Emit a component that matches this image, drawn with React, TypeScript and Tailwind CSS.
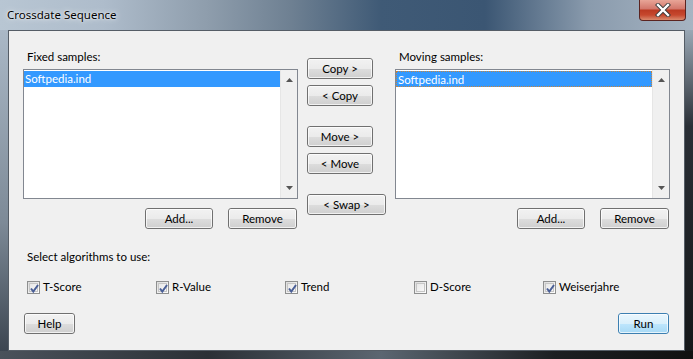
import React from "react";

const font = { fontFamily: 'Lato, "Noto Sans", sans-serif' };

function Btn({ label, w, primary }: { label: string; w: number; primary?: boolean }) {
  return (
    <div
      className={
        "relative h-[21px] rounded-[3px] border flex items-center justify-center text-[11.5px] text-black leading-none " +
        (primary
          ? "border-[#3c7fb1] bg-[linear-gradient(to_bottom,#eaf6fd_0%,#d9f0fc_50%,#bee6fd_51%,#a7d9f5_100%)]"
          : "border-[#707070] bg-[linear-gradient(to_bottom,#f2f2f2_0%,#ebebeb_50%,#dddddd_51%,#cfcfcf_100%)]")
      }
      style={{ width: w }}
    >
      <div className="absolute inset-0 rounded-[2px] border border-white/70 pointer-events-none" />
      <span className="relative">{label}</span>
    </div>
  );
}

function ListBox({ item, focus }: { item: string; focus?: boolean }) {
  return (
    <div className="h-[130px] w-[275px] border border-[#828790] bg-white flex">
      <div className="flex-1 pt-[1px]">
        <div
          className={
            "h-[16px] bg-[#3399ff] text-white text-[11.5px] leading-[15px] pl-[1px] " +
            (focus ? "border border-dotted border-[#c8843c]" : "")
          }
        >
          {item}
        </div>
      </div>
      <div className="w-[17px] bg-[#f0f0f0] border-l border-[#e6e6e6] flex flex-col items-center justify-between py-[8px]">
        <svg width="7" height="4" viewBox="0 0 7 4">
          <path d="M0 4 L3.5 0 L7 4 Z" fill="#555" />
        </svg>
        <svg width="7" height="4" viewBox="0 0 7 4">
          <path d="M0 0 L3.5 4 L7 0 Z" fill="#555" />
        </svg>
      </div>
    </div>
  );
}

function Check({ label, checked }: { label: string; checked: boolean }) {
  return (
    <div className="w-[129px] flex items-center gap-[3px] text-[11.5px] text-black">
      <div className="w-[13px] h-[13px] border border-[#8e8f8f] bg-[linear-gradient(135deg,#dcdcdc,#ffffff)] p-[1px]">
        <div className="w-full h-full border border-[#c6c6c6] bg-[linear-gradient(135deg,#e8e8e8,#f8f8f8)] relative">
          {checked && (
            <svg className="absolute -left-[1px] -top-[1px]" width="11" height="11" viewBox="0 0 11 11">
              <path d="M2 5.5 L4.3 8.5 L9 2" stroke="#4a5f97" strokeWidth="2" fill="none" />
            </svg>
          )}
        </div>
      </div>
      <span>{label}</span>
    </div>
  );
}

export default function App() {
  return (
    <div
      className="w-[693px] h-[359px] overflow-hidden flex flex-col bg-[linear-gradient(to_right,#b8c6d3_0%,#aebccb_15%,#8e9dac_30%,#6e8092_42%,#3f5a76_55%,#3b5673_70%,#8a9bad_85%,#a6b4c2_100%)]"
      style={font}
    >
      {/* Title bar */}
      <div className="h-[30px] flex items-start relative">
        <div className="pl-[7px] pt-[6px] text-black [text-shadow:0_0_6px_rgba(255,255,255,0.9),0_0_2px_rgba(255,255,255,0.9)]" style={{ fontFamily: '"Noto Sans", sans-serif', fontSize: 11.5 }}>
          Crossdate Sequence
        </div>
        <div className="absolute left-[639px] top-0 w-[47px] h-[21px] rounded-b-[4px] border border-[#5b2420] border-t-0 bg-[linear-gradient(to_bottom,#e8a597_0%,#d2766a_45%,#bb3a22_50%,#c6482e_75%,#d98a6e_100%)] flex items-center justify-center">
          <svg width="16" height="14" viewBox="0 0 16 14">
            <path d="M3 2 L13 12 M13 2 L3 12" stroke="#3a3a3a" strokeWidth="4.2" strokeLinecap="square" />
            <path d="M3 2 L13 12 M13 2 L3 12" stroke="#ffffff" strokeWidth="2.4" strokeLinecap="square" />
          </svg>
        </div>
      </div>

      <div className="flex flex-1">
        <div className="w-[8px] bg-[linear-gradient(to_bottom,#aab8c6,#7d8a97_60%,#3c4550)]" />
        {/* Client area */}
        <div className="w-[677px] h-[321px] bg-[#f0f0f0] border border-[#555d66] text-[11.5px] text-black flex flex-col">
          <div className="flex pt-[17px] pl-[14px]">
            {/* left */}
            <div className="w-[275px] flex flex-col">
              <div className="h-[21px] leading-[18px] pl-[4px]">Fixed samples:</div>
              <ListBox item="Softpedia.ind" />
              <div className="flex justify-end gap-[15px] pr-[1px] mt-[9px]">
                <Btn label="Add..." w={68} />
                <Btn label="Remove" w={69} />
              </div>
            </div>
            {/* middle */}
            <div className="w-[79px] ml-[9px] mt-[10px] flex flex-col">
              <Btn label="Copy >" w={66} />
              <div className="h-[6px]" />
              <Btn label="< Copy" w={66} />
              <div className="h-[20px]" />
              <Btn label="Move >" w={66} />
              <div className="h-[6px]" />
              <Btn label="< Move" w={66} />
              <div className="h-[20px]" />
              <Btn label="< Swap >" w={79} />
            </div>
            {/* right */}
            <div className="w-[275px] ml-[9px] flex flex-col">
              <div className="h-[21px] leading-[18px] pl-[4px]">Moving samples:</div>
              <ListBox item="Softpedia.ind" focus />
              <div className="flex justify-end gap-[15px] pr-[1px] mt-[9px]">
                <Btn label="Add..." w={68} />
                <Btn label="Remove" w={69} />
              </div>
            </div>
          </div>

          <div className="h-[18px] leading-[18px] pl-[18px] mt-[19px]">Select algorithms to use:</div>
          <div className="flex pl-[18px] mt-[12px] h-[18px]">
            <Check label="T-Score" checked />
            <Check label="R-Value" checked />
            <Check label="Trend" checked />
            <Check label="D-Score" checked={false} />
            <Check label="Weiserjahre" checked />
          </div>
          <div className="flex justify-between px-[15px] mt-[17px]">
            <Btn label="Help" w={51} />
            <Btn label="Run" w={51} primary />
          </div>
        </div>
        <div className="w-[8px] bg-[linear-gradient(to_bottom,#9aa8b5,#2a2f36_30%,#151719)]" />
      </div>
      <div className="h-[8px] bg-[linear-gradient(to_right,#4a525b,#2b3036_30%,#5b6671_55%,#1c1f22_80%,#111)]" />
    </div>
  );
}
